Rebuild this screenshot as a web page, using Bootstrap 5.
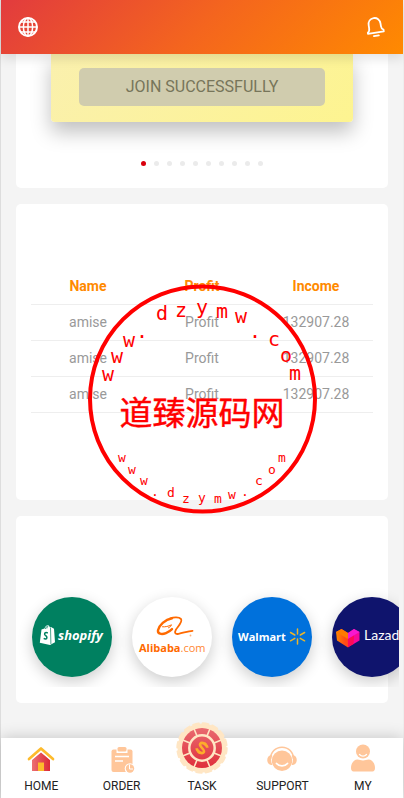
<!DOCTYPE html>
<html lang="en">
<head>
<meta charset="utf-8">
<meta name="viewport" content="width=device-width, initial-scale=1">
<title>Home</title>
<link href="https://cdn.jsdelivr.net/npm/bootstrap@5.3.0/dist/css/bootstrap.min.css" rel="stylesheet">
<style>
body{font-family:Roboto,"Liberation Sans",sans-serif;background:#f4f4f4;color:#333}
.page{border-left:1px solid #ddd;border-right:1px solid #eee}
.topbar{padding:14px 16px 14px 15px;background:linear-gradient(135deg,#e23b3e,#f4651e 50%,#ff8a00);box-shadow:0 5px 10px rgba(0,0,0,.1)}
.icon-btn{width:24px;height:26px;line-height:1}
main{padding:0 15px 34px;gap:16px}
.panel{background:#fff;border-radius:5px}
.panel-task{padding:0 35px 22px;border-radius:0 0 5px 5px}
.offer{padding:14px 28px 16px;background:linear-gradient(135deg,#faf0ae,#fdf490);border-radius:0 0 4px 4px;box-shadow:0 10px 20px rgba(0,0,0,.25)}
.join,.join:disabled{height:38px;padding:0;border:0;border-radius:5px;background:#d0ccae;color:#77755a;font-size:16px;opacity:1}
.dots{gap:8px;margin-top:39px}
.dots button{width:5px;height:5px;border:0;padding:0;border-radius:50%;background:#ebebeb}
.dots button.active{background:#d9000d}
.panel-income{padding:65px 15px 87px}
.income{font-size:14px;line-height:20px;table-layout:fixed;--bs-table-bg:transparent;--bs-table-color:#999;color:#999;border-color:#eee}
.income th,.income td{padding:7px 0 8px;text-align:center;color:#999}
.income thead th{color:#ff8a00;font-weight:700}
.panel-brands{padding:66px 0 16px}
.brands{gap:20px;margin-right:-11px;padding:15px 0 10px 16px;overflow:hidden}
.brand{width:80px;height:80px;border-radius:50%;box-shadow:0 5px 15px rgba(0,0,0,.2)}
.shopify{background:#008060}.alibaba{background:#fff}.walmart{background:#0071dc}.lazada{background:#0f146d}
.tabbar{height:60px;background:#fff;box-shadow:0 0 15px rgba(0,0,0,.2)}
.tabbar a{font-size:12px;line-height:14px;color:#222;padding-bottom:5px}
.tabbar svg{margin-bottom:5px;flex-shrink:0}
.seal{position:absolute;left:50%;top:283px;transform:translateX(-50%);pointer-events:none;z-index:5}
.seal text{fill:#f00;text-anchor:middle}
.seal .ring-text{font-family:"DejaVu Sans Mono",monospace;font-size:20px}
.seal .ring-small{font-family:"DejaVu Sans Mono",monospace;font-size:13px}
.seal .seal-name{font-family:"Noto Sans CJK SC",sans-serif;font-size:33px;stroke:#f00;stroke-width:.4}
</style>
<script src="https://cdn.jsdelivr.net/npm/bootstrap@5.3.0/dist/js/bootstrap.bundle.min.js"></script>
</head>
<body>
<div class="page position-relative d-flex flex-column min-vh-100">
<header class="topbar sticky-top d-flex justify-content-between align-items-center">
  <button class="icon-btn btn p-0 border-0" aria-label="Language">
    <svg width="22" height="22" viewBox="0 0 22 22" fill="none" stroke="#fff" stroke-width="1.5"><circle cx="11" cy="11" r="9" stroke-width="2"/><ellipse cx="11" cy="11" rx="4.600" ry="9"/><path d="M11 2v18M2 11h18M4 6h14M4 16h14"/></svg>
  </button>
  <button class="icon-btn btn p-0 border-0" aria-label="Notifications">
    <svg width="22" height="22" viewBox="0 0 22 22" fill="none" stroke="#fff" stroke-width="1.800" stroke-linecap="round" stroke-linejoin="round"><g transform="rotate(-9 11 11)"><path d="M3 16.700h16v-1.700c-1.600-.8-2-2-2-4V8.500C17 4.500 14.500 2 11 2S5 4.500 5 8.500v3c0 2-.4 3.200-2 4zM8.500 19.800h5"/></g></svg>
  </button>
</header>
<main class="flex-grow-1 d-flex flex-column">
  <section class="panel panel-task">
    <div class="offer"><button class="join btn w-100 d-block" disabled>JOIN SUCCESSFULLY</button></div>
    <div class="dots d-flex justify-content-center">
      <button class="active" aria-label="Slide 1"></button><button aria-label="Slide 2"></button><button aria-label="Slide 3"></button><button aria-label="Slide 4"></button><button aria-label="Slide 5"></button><button aria-label="Slide 6"></button><button aria-label="Slide 7"></button><button aria-label="Slide 8"></button><button aria-label="Slide 9"></button><button aria-label="Slide 10"></button>
    </div>
  </section>
  <section class="panel panel-income">
    <table class="income table mb-0">
      <thead><tr><th scope="col">Name</th><th scope="col">Profit</th><th scope="col">Income</th></tr></thead>
      <tbody>
        <tr><td>amise</td><td>Profit</td><td>132907.28</td></tr>
        <tr><td>amise</td><td>Profit</td><td>132907.28</td></tr>
        <tr><td>amise</td><td>Profit</td><td>132907.28</td></tr>
      </tbody>
    </table>
  </section>
  <section class="panel panel-brands">
    <div class="brands d-flex">
      <div class="brand shopify flex-shrink-0">
        <svg width="80" height="80" viewBox="0 0 80 80" role="img"><path fill="#fff" d="M9.500 32.500l3-1c.5-2 2-3.500 3.500-3.300 1 .1 1.500 1.200 1.700 2l1.300-.2 3 1.800 1 13.500-5 2.600L7.800 45.700z"/><path d="M13.300 32c.4-1.700 1.300-2.700 2.300-2.900M14.800 31.500c.2-1 .7-2 1.200-2.400M18.500 30.500l.4 16.500" fill="none" stroke="#008060" stroke-width=".7"/><path d="M15.800 36c-2-.9-3.300-.2-3.200 1.200.1 1.500 2.500 1.600 2.300 3.400-.2 1.700-1.900 1.700-3.200.8" fill="none" stroke="#008060" stroke-width="1.500"/><text x="26" y="43" fill="#fff" font-family="Open Sans,sans-serif" font-weight="700" font-style="italic" font-size="13">shopify</text></svg>
      </div>
      <div class="brand alibaba flex-shrink-0">
        <svg width="80" height="80" viewBox="0 0 80 80" role="img"><g fill="none" stroke="#ff6a00" stroke-linecap="round"><path stroke-width="1.800" d="M38 21.500c4-1.500 9-1.500 11 .5 2 2.500-3 7.500-5 10.500-2 3.500-.5 5 2.500 4.300 6-1.300 10-2.800 14-3"/><path stroke-width="2.400" d="M40 21.300c-7 1.200-13 7-14 12-.5 3.500 3.500 4.500 8 2.800 2.500-1 4.500-2.500 6-4"/><path stroke-width="1" d="M30.500 29.800c3 .2 5.500-.3 9-2-.7 1.700-1.700 2.500-3 3"/></g><circle cx="58.500" cy="38.500" r=".9" fill="#ffb27f"/><text x="7" y="55" fill="#ff6a00" font-family="Open Sans,sans-serif" font-size="11"><tspan font-weight="700">Alibaba</tspan><tspan fill="#ff8732">.com</tspan></text></svg>
      </div>
      <div class="brand walmart flex-shrink-0">
        <svg width="80" height="80" viewBox="0 0 80 80" role="img"><text x="6" y="44" fill="#fff" font-family="Open Sans,sans-serif" font-weight="700" font-size="11">Walmart</text><path d="M65.500 32v5M65.500 42v5M58.500 35.500l4.300 2.500M68.300 41.300l4.300 2.500M58.500 43.800l4.300-2.500M68.300 38l4.300-2.500" fill="none" stroke="#e9b52c" stroke-width="1.500" stroke-linecap="round"/></svg>
      </div>
      <div class="brand lazada flex-shrink-0">
        <svg width="80" height="80" viewBox="0 0 80 80" role="img"><defs><linearGradient id="lz"><stop stop-color="#ff8a00"/><stop offset=".5" stop-color="#ff4b16"/></linearGradient></defs><path fill="url(#lz)" d="M4 35l5.500-3 6.500 4 6 5-6 9.500L5 43.500z"/><path fill="#f5089c" d="M16 36l6-4 5.500 3v8.500L16 50.300l-.2-8z"/><path fill="#ff7a00" d="M4 35l5.500-3 6.500 4v6z"/><path fill="#f718d0" d="M16 36l6-4 5.500 3L16 42z"/><path fill="#ff0a55" d="M16 42l6-3.500-.5 8.500-5.500 3.300z"/><text x="32" y="43" fill="#fff" font-family="Lato,sans-serif" font-size="14">Lazada</text></svg>
      </div>
    </div>
  </section>
</main>
<nav class="tabbar sticky-bottom d-flex" aria-label="Main">
  <a href="#" class="col d-flex flex-column align-items-center justify-content-end text-decoration-none">
    <svg width="28" height="28" viewBox="0 0 28 28"><defs><linearGradient id="hm"><stop stop-color="#ec7073"/><stop offset="1" stop-color="#dc2935"/></linearGradient></defs><path fill="url(#hm)" d="M5 13.500l9-8 9 8V25H5z"/><path fill="#fff" d="M2 14L14 3l12 11v2.500L14 6.500 2 16.500z"/><path fill="#fdbb2d" d="M11 16.500h6V25h-6z"/><path d="M2 13L14 2.500l12 10.500" fill="none" stroke="#fdbb2d" stroke-width="2.700" stroke-linejoin="round" stroke-linecap="round"/></svg>HOME</a>
  <a href="#" class="col d-flex flex-column align-items-center justify-content-end text-decoration-none">
    <svg width="28" height="28" viewBox="0 0 28 28"><rect x="3.500" y="3.500" width="21" height="22.500" rx="2" fill="#ffc69a"/><path d="M8.500 1.500h11v5.500h-11z" fill="#fff"/><rect x="9.500" y="1" width="9" height="4.500" rx="1.500" fill="#ffc69a"/><path d="M7 10.500h14M7 15h8" stroke="#fff" stroke-width="1.300"/><circle cx="22" cy="22.500" r="5.300" fill="#fff"/><circle cx="22" cy="22.500" r="4.200" fill="#ffc69a"/><path d="M21.500 18.500v4.500h3.500" stroke="#fff" fill="none"/></svg>ORDER</a>
  <a href="#" class="col d-flex flex-column align-items-center justify-content-end text-decoration-none">
    <svg width="52" height="52" viewBox="-26 -26 52 52"><defs><linearGradient id="tk" x2="0" y2="1"><stop stop-color="#e96a70"/><stop offset="1" stop-color="#df2e3b"/></linearGradient></defs><circle r="24.500" fill="#ffe6c4"/><circle r="24.700" fill="none" stroke="#ffe6c4" stroke-width="2" stroke-dasharray="5.700 4" stroke-linecap="round"/><circle r="20" fill="url(#tk)"/><circle r="12.700" fill="none" stroke="#ffe6c4" stroke-width="2.500"/><path d="M-5 -12L-8.300-20M5-12L8.300-20M-5 12L-8.300 20M5 12L8.300 20M12-5L20-8.300M12 5L20 8.300M-12-5L-20-8.300M-12 5L-20 8.300" stroke="#ffe6c4" stroke-width="1.600"/><path transform="rotate(38)" d="M4-3.500C2.500-5.500-4-5.500-4-2.200-4 .8 4-.8 4 2.200 4 5.500-2.500 5.500-4 3.500M0-6.500v2M0 4.500v2" fill="none" stroke="#fdac2b" stroke-width="2.600"/></svg>TASK</a>
  <a href="#" class="col d-flex flex-column align-items-center justify-content-end text-decoration-none">
    <svg width="32" height="28" viewBox="0 0 32 28"><path d="M4.500 13C4.500 6 9.500 1.200 16 1.200s11.500 4.800 11.500 11.800" fill="none" stroke="#ffc69a" stroke-width="1.600"/><circle cx="16" cy="14.700" r="10.200" fill="#ffc69a"/><path d="M5 9c-5 1-5 9 0 10 1 .2 1.500-.3 1-1.200-1.300-2.500-1.300-5 0-7.600.5-.9 0-1.400-1-1.200zM27 9c5 1 5 9 0 10-1 .2-1.500-.3-1-1.200 1.300-2.500 1.300-5 0-7.600-.5-.9 0-1.400 1-1.200z" fill="#ffc69a"/><path d="M10.500 17.500c2.800 3.300 8.200 3.300 11 0" fill="none" stroke="#fff" stroke-width="1.800" stroke-linecap="round"/></svg>SUPPORT</a>
  <a href="#" class="col d-flex flex-column align-items-center justify-content-end text-decoration-none">
    <svg width="28" height="30" viewBox="0 0 28 30"><circle cx="14" cy="7.500" r="7" fill="#ffc69a"/><path d="M10.500 10.500c2 2 5 2 7 0" fill="none" stroke="#fff" stroke-width="1.300" stroke-linecap="round"/><path d="M2 24c0-5 3-8.500 6.500-8.500 2 0 3 1 5.500 1s3.500-1 5.500-1C23 15.500 26 19 26 24c0 2-1 3.500-2.500 3.500h-19C3 27.500 2 26 2 24z" fill="#ffc69a"/></svg>MY</a>
</nav>
<svg class="seal" width="232" height="232" viewBox="86 283 232 232">
  <circle cx="202.500" cy="399" r="112.500" fill="none" stroke="#f00" stroke-width="4"/>
  <text class="ring-text"><tspan x="108" y="381">w</tspan><tspan x="117" y="363">w</tspan><tspan x="129" y="347">w</tspan><tspan x="142" y="338">.</tspan><tspan x="162" y="320">d</tspan><tspan x="181" y="317">z</tspan><tspan x="202" y="314">y</tspan><tspan x="222" y="318">m</tspan><tspan x="241" y="323">w</tspan><tspan x="255" y="338">.</tspan><tspan x="274" y="346">c</tspan><tspan x="286" y="362">o</tspan><tspan x="295" y="380">m</tspan></text>
  <text class="seal-name" x="202" y="425">道臻源码网</text>
  <text class="ring-small"><tspan x="122" y="462">w</tspan><tspan x="132" y="474">w</tspan><tspan x="144" y="485">w</tspan><tspan x="155" y="496">.</tspan><tspan x="171" y="497">d</tspan><tspan x="186" y="503">z</tspan><tspan x="202" y="502">y</tspan><tspan x="218" y="503">m</tspan><tspan x="232" y="499">w</tspan><tspan x="245" y="496">.</tspan><tspan x="259" y="485">c</tspan><tspan x="272" y="474">o</tspan><tspan x="282" y="462">m</tspan></text>
</svg>
</div>
</body>
</html>
